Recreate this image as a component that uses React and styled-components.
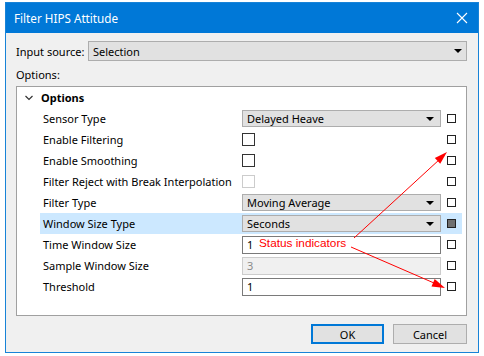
import React from 'react';
import styled, { createGlobalStyle, css } from 'styled-components';

const GlobalStyle = createGlobalStyle`
  html, body { margin: 0; padding: 0; background: #ffffff; }
  body { font-family: "Noto Sans", "Open Sans", sans-serif; font-size: 11px; color: #000; }
  * { box-sizing: border-box; }
`;

const Page = styled.div`
  position: relative;
  width: 484px;
  height: 356px;
  overflow: hidden;
  padding: 2px 0 0 5px;
`;

const Window = styled.div`
  width: 474px;
  height: 351px;
  border: 1px solid #1883d7;
  background: #f0f0f0;
  display: flex;
  flex-direction: column;
`;

const TitleBar = styled.div`
  height: 30px;
  background: #0078d7;
  color: #fff;
  display: flex;
  align-items: center;
  padding: 0 10px 0 8px;
  font-size: 11.7px;
`;

const CloseButton = styled.div`
  margin-left: auto;
  width: 12px;
  height: 12px;
  display: flex;
`;

const Body = styled.div`
  flex: 1;
  display: flex;
  flex-direction: column;
  padding: 8px 11px 0 10px;
`;

const InputRow = styled.div`
  display: flex;
  align-items: center;
  height: 20px;
`;

const InputLabel = styled.span`
  width: 72px;
  flex: none;
`;

const Combo = styled.div`
  position: relative;
  display: flex;
  align-items: center;
  background: #e1e1e1;
  border: 1px solid #adadad;
  padding-left: 4px;
  ${p => p.$grow && css`flex: 1;`}
  height: ${p => p.$h || 20}px;
  line-height: 1;
`;

const Arrow = styled.span`
  position: absolute;
  right: ${p => p.$right || 5}px;
  top: 50%;
  margin-top: -2px;
  width: 0;
  height: 0;
  border-left: 4px solid transparent;
  border-right: 4px solid transparent;
  border-top: 4px solid #000;
`;

const SectionLabel = styled.div`
  margin-top: 7px;
  line-height: 14px;
`;

const Grid = styled.div`
  margin-top: 4px;
  height: 230px;
  border: 1px solid #a0a0a0;
  background: #fff;
  display: flex;
  flex-direction: column;
`;

const GroupHeader = styled.div`
  height: 21px;
  display: flex;
  align-items: center;
  padding-left: 8px;
  gap: 8px;
  font-weight: bold;
`;

const Row = styled.div`
  height: 21px;
  margin-left: 23px;
  width: 422px;
  display: grid;
  grid-template-columns: 202px 199px 21px;
  align-items: center;
  background: ${p => (p.$selected ? '#cce8ff' : 'transparent')};
`;

const Label = styled.div`
  padding-left: 3px;
  white-space: nowrap;
  overflow: hidden;
`;

const TextBox = styled.div`
  height: 18px;
  display: flex;
  align-items: center;
  padding-left: 4px;
  background: ${p => (p.$disabled ? '#f0f0f0' : '#fff')};
  border: 1px solid ${p => (p.$disabled ? '#cccccc' : '#7a7a7a')};
  color: ${p => (p.$disabled ? '#8a8a8a' : '#000')};
`;

const CheckBox = styled.div`
  width: 13px;
  height: 13px;
  border: 1px solid ${p => (p.$disabled ? '#cccccc' : '#333')};
  background: #fff;
`;

const Status = styled.div`
  margin-left: 6px;
  width: 9px;
  height: 9px;
  border: 1px solid #222;
  background: ${p => (p.$filled ? '#707070' : '#fff')};
`;

const Footer = styled.div`
  display: flex;
  justify-content: flex-end;
  gap: 9px;
  margin-top: 8px;
`;

const Button = styled.div`
  height: 20px;
  width: ${p => p.$w}px;
  display: flex;
  align-items: center;
  justify-content: center;
  background: #e1e1e1;
  border: ${p => (p.$default ? '2px solid #0078d7' : '1px solid #adadad')};
`;

const Overlay = styled.svg`
  position: absolute;
  left: 0;
  top: 0;
  pointer-events: none;
`;

const Note = styled.span`
  position: absolute;
  left: 259px;
  top: 235px;
  color: #ff0000;
  font-family: "Liberation Sans", Arial, sans-serif;
  font-size: 11.8px;
  line-height: 16px;
`;

const rows = [
  { label: 'Sensor Type', kind: 'combo', value: 'Delayed Heave' },
  { label: 'Enable Filtering', kind: 'check' },
  { label: 'Enable Smoothing', kind: 'check' },
  { label: 'Filter Reject with Break Interpolation', kind: 'check', disabled: true },
  { label: 'Filter Type', kind: 'combo', value: 'Moving Average' },
  { label: 'Window Size Type', kind: 'combo', value: 'Seconds', selected: true },
  { label: 'Time Window Size', kind: 'text', value: '1' },
  { label: 'Sample Window Size', kind: 'text', value: '3', disabled: true },
  { label: 'Threshold', kind: 'text', value: '1' },
];

const Value = ({ row }) => {
  if (row.kind === 'combo') {
    return (
      <Combo $h={17}>
        {row.value}
        <Arrow $right={6} />
      </Combo>
    );
  }
  if (row.kind === 'check') return <CheckBox $disabled={row.disabled} />;
  return <TextBox $disabled={row.disabled}>{row.value}</TextBox>;
};

export default function App() {
  return (
    <Page>
      <GlobalStyle />
      <Window>
        <TitleBar>
          Filter HIPS Attitude
          <CloseButton>
            <svg width="12" height="12" viewBox="0 0 12 12">
              <path d="M1 1L11 11M11 1L1 11" stroke="#fff" strokeWidth="1.1" />
            </svg>
          </CloseButton>
        </TitleBar>
        <Body>
          <InputRow>
            <InputLabel>Input source:</InputLabel>
            <Combo $grow>
              Selection
              <Arrow $right={4} />
            </Combo>
          </InputRow>
          <SectionLabel>Options:</SectionLabel>
          <Grid>
            <GroupHeader>
              <svg width="8" height="6" viewBox="0 0 8 6">
                <path d="M0.5 1L4 4.5L7.5 1" stroke="#333" strokeWidth="1.2" fill="none" />
              </svg>
              Options
            </GroupHeader>
            {rows.map(r => (
              <Row key={r.label} $selected={r.selected}>
                <Label>{r.label}</Label>
                <Value row={r} />
                <Status $filled={r.selected} />
              </Row>
            ))}
          </Grid>
          <Footer>
            <Button $w={73} $default>OK</Button>
            <Button $w={74}>Cancel</Button>
          </Footer>
        </Body>
      </Window>
      <Overlay width="484" height="356" viewBox="0 0 484 356">
        <line x1="354" y1="238" x2="440" y2="159" stroke="#ff0000" strokeWidth="1" />
        <polygon points="447,152 440.2,163.7 434.8,157.9" fill="#ff0000" />
        <line x1="351" y1="247" x2="434" y2="283" stroke="#ff0000" strokeWidth="1" />
        <polygon points="445,288 431.5,286.5 434.7,279.1" fill="#ff0000" />
      </Overlay>
      <Note>Status indicators</Note>
    </Page>
  );
}
